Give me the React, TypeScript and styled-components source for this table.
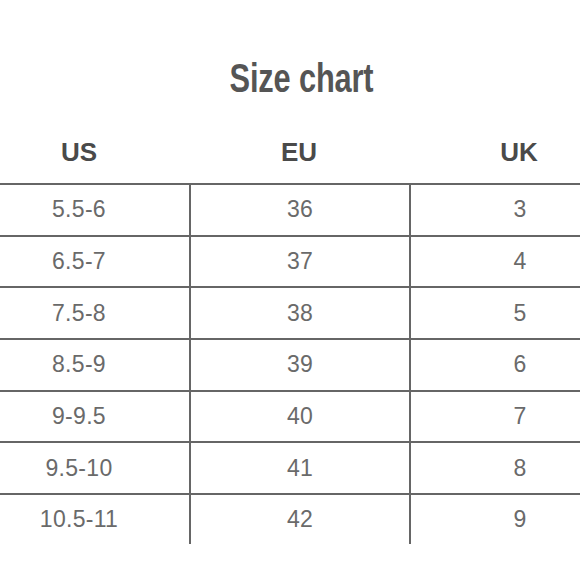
import React from 'react';
import styled, { createGlobalStyle } from 'styled-components';

const rows: [string, string, string][] = [
  ['5.5-6', '36', '3'],
  ['6.5-7', '37', '4'],
  ['7.5-8', '38', '5'],
  ['8.5-9', '39', '6'],
  ['9-9.5', '40', '7'],
  ['9.5-10', '41', '8'],
  ['10.5-11', '42', '9'],
];

const GlobalStyle = createGlobalStyle`
  html, body {
    margin: 0;
    padding: 0;
    background: #ffffff;
    overflow: hidden;
  }
  body {
    font-family: "Liberation Sans", Arial, sans-serif;
  }
`;

const Page = styled.div`
  width: 580px;
  height: 580px;
  overflow: hidden;
  display: flex;
  flex-direction: column;
`;

const Title = styled.h1`
  margin: 48px 0 0;
  height: 60px;
  display: flex;
  align-items: center;
  justify-content: center;
  padding-left: 22px;
  font-family: "Liberation Sans", Arial, sans-serif;
  font-size: 40px;
  font-weight: 700;
  color: #555555;
`;

// the picture uses a condensed display face; narrow Liberation Sans to match
const Narrow = styled.span`
  display: inline-block;
  transform: scaleX(0.77);
  letter-spacing: -0.2px;
`;

const Table = styled.div`
  margin: 13px 0 0 -31px;
  width: 660px;
  display: flex;
  flex-direction: column;
`;

const Row = styled.div<{ $head?: boolean }>`
  display: grid;
  grid-template-columns: repeat(3, 220px);
  height: ${(p) => (p.$head ? '62px' : '51.7px')};
  box-sizing: border-box;
  border-top: ${(p) => (p.$head ? 'none' : '2px solid #666666')};
  &:last-child {
    height: 51px;
  }
`;

const Cell = styled.div<{ $head?: boolean; $divided?: boolean }>`
  display: flex;
  align-items: center;
  justify-content: center;
  box-sizing: border-box;
  border-left: ${(p) => (p.$divided ? '2px solid #666666' : 'none')};
  font-size: ${(p) => (p.$head ? '26px' : '23px')};
  font-weight: ${(p) => (p.$head ? 700 : 400)};
  letter-spacing: ${(p) => (p.$head ? '0' : '0.3px')};
  color: ${(p) => (p.$head ? '#4a4a4a' : '#6a6a6a')};
`;

export default function App() {
  return (
    <Page>
      <GlobalStyle />
      <Title>
        <Narrow>Size chart</Narrow>
      </Title>
      <Table>
        <Row $head>
          {['US', 'EU', 'UK'].map((h) => (
            <Cell key={h} $head>
              {h}
            </Cell>
          ))}
        </Row>
        {rows.map((r) => (
          <Row key={r[0]}>
            {r.map((v, i) => (
              <Cell key={i} $divided={i > 0}>
                {v}
              </Cell>
            ))}
          </Row>
        ))}
      </Table>
    </Page>
  );
}
